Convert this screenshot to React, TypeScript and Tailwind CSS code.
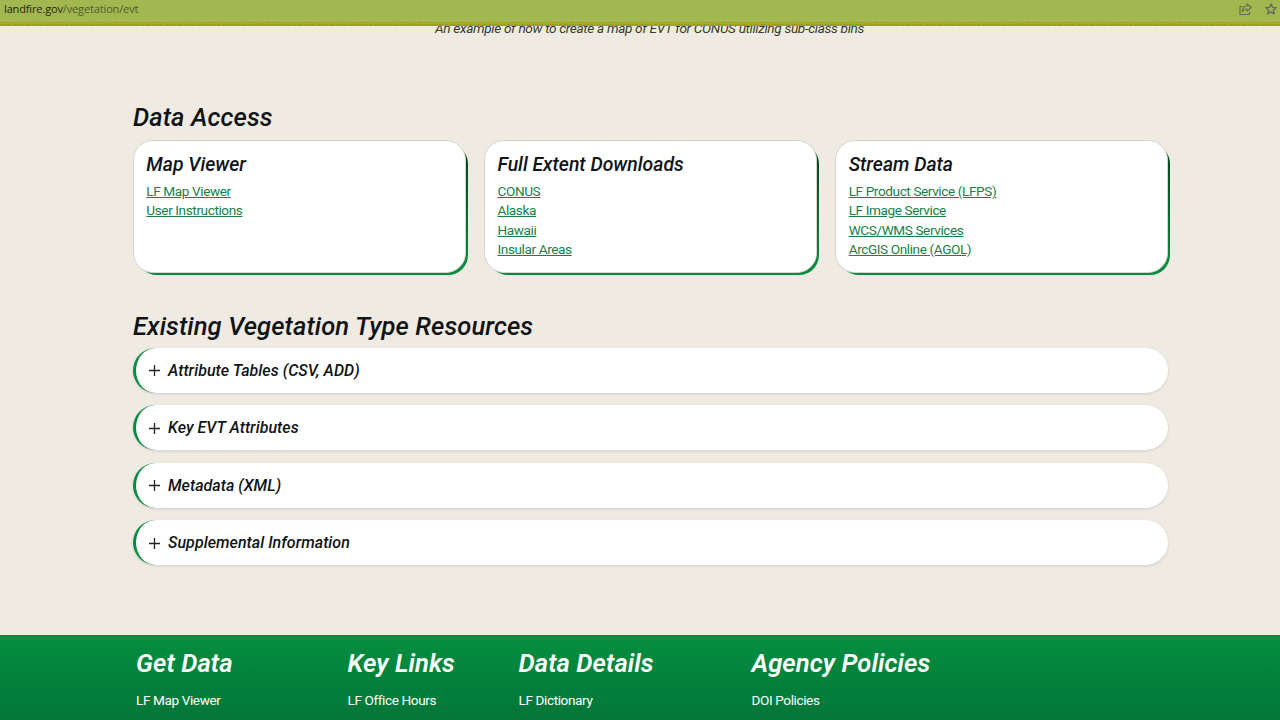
const cards = [
  { title: "Map Viewer", links: ["LF Map Viewer", "User Instructions"] },
  { title: "Full Extent Downloads", links: ["CONUS", "Alaska", "Hawaii", "Insular Areas"] },
  {
    title: "Stream Data",
    links: ["LF Product Service (LFPS)", "LF Image Service", "WCS/WMS Services", "ArcGIS Online (AGOL)"],
  },
];

const resources = ["Attribute Tables (CSV, ADD)", "Key EVT Attributes", "Metadata (XML)", "Supplemental Information"];

const footerColumns = [
  { title: "Get Data", link: "LF Map Viewer", width: "w-[211.5px]" },
  { title: "Key Links", link: "LF Office Hours", width: "w-[171px]" },
  { title: "Data Details", link: "LF Dictionary", width: "w-[233px]" },
  { title: "Agency Policies", link: "DOI Policies", width: "w-[220px]" },
];

function AddressBar() {
  return (
    <header className="flex h-[26px] shrink-0 flex-col bg-[#a3b750]">
      <div className="flex h-[22px] items-start justify-between pl-1 pr-[3px]">
        <p className="pt-[1px] font-['Open_Sans',sans-serif] text-[11px] leading-4 tracking-[-0.14px] text-[#4d5b2c]">
          <span className="text-[#1e2a12]">landfire.gov</span>/vegetation/evt
        </p>
        <div className="flex gap-[13px] pt-[3px] text-[#5f6d55]">
          <svg width="13" height="12" viewBox="0 0 13 12" fill="none" stroke="currentColor" strokeWidth="1.1">
            <path d="M3.500 3.500H1v8h9.500V9" />
            <path d="M8 .8l4.300 3.700L8 8.200V6C6 5.900 4.500 6.700 3.200 8.600 3.500 5.300 5.200 3.100 8 3z" strokeLinejoin="round" />
          </svg>
          <svg width="12" height="12" viewBox="0 0 12 12" fill="none" stroke="currentColor" strokeWidth="1.3" strokeLinejoin="round">
            <path d="M6 .8l1.500 3.500 3.800.3-2.900 2.500.9 3.800L6 8.900l-3.300 2 .9-3.800L.7 4.600l3.800-.3z" />
          </svg>
        </div>
      </div>
      <svg className="block h-1 w-full" width="1280" height="4">
        <defs>
          <pattern id="trim" width="19" height="4" patternUnits="userSpaceOnUse">
            <rect width="19" height="4" fill="#9ea315" />
            <path d="M0 1.500l2 .7 3-1.500 2 1.500 3-1.700 2 1.800 3-1.500 4 .5" stroke="#b0b93c" strokeWidth=".9" fill="none" />
            <path d="M1 2.700l3-.7M8 3l3-1M13 2.700l4-.6" stroke="#909a10" strokeWidth=".8" />
          </pattern>
        </defs>
        <rect width="1280" height="4" fill="url(#trim)" />
      </svg>
    </header>
  );
}

export default function App() {
  return (
    <div className="flex h-[720px] w-[1280px] flex-col overflow-hidden bg-[#efeae2] font-[Roboto,sans-serif] text-[#101417]">
      <AddressBar />
      <main className="flex h-[609px] shrink-0 flex-col overflow-hidden pl-[133px] pr-[111px]">
        <div className="h-[73px] shrink-0 overflow-hidden">
          <p className="-mt-[7px] ml-[302px] whitespace-nowrap text-[13.6px] leading-[19px] tracking-[-0.32px] italic text-[#33393c]">
            An example of how to create a map of EVT for CONUS utilizing sub-class bins
          </p>
        </div>
        <h2 className="h-[40px] shrink-0 text-[25.6px] font-medium italic leading-[36px] tracking-[0.08px]">Data Access</h2>
        <div className="flex h-[169px] shrink-0 gap-[18.500px] pt-[0.5px]">
          {cards.map((card) => (
            <div
              key={card.title}
              className="relative isolate h-[133.500px] w-[332.700px] before:absolute before:-bottom-[2px] before:-right-[2px] before:left-[4px] before:top-[4px] before:-z-10 before:rounded-[20px] before:bg-linear-to-b before:from-[#033d18] before:to-[#058c3f] before:to-90%"
            >
              <section className="h-full rounded-[20px] border border-[#d5d5d2] bg-white pl-[12.300px] pt-[12px]">
                <h3 className="mb-[5.700px] text-[19.4px] font-medium italic leading-6">{card.title}</h3>
                <ul>
                  {card.links.map((link) => (
                    <li key={link} className="text-[13.6px] leading-[19.200px] tracking-[-0.4px]">
                      <a href="#" className="text-[#198047] underline">{link}</a>
                    </li>
                  ))}
                </ul>
              </section>
            </div>
          ))}
        </div>
        <h2 className="h-[39.800px] shrink-0 text-[25.6px] font-medium italic leading-[36px] tracking-[0.08px]">
          Existing Vegetation Type Resources
        </h2>
        <div className="flex flex-col gap-[12.500px]">
          {resources.map((title) => (
            <button
              key={title}
              className="flex h-[45px] w-[1035px] shrink-0 items-center rounded-full border-l-[3px] border-[#058c3f] bg-white pl-[13px] pt-[0.6px] text-left shadow-[0_1px_3px_rgba(0,0,0,0.12)]"
            >
              <svg className="mr-[8px]" width="11" height="11" viewBox="0 0 11 11" stroke="#222" strokeWidth="1.3">
                <path d="M5.500 0v11M0 5.500h11" />
              </svg>
              <span className="text-[16px] font-medium italic leading-5 tracking-[0.04px]">{title}</span>
            </button>
          ))}
        </div>
      </main>
      <footer className="flex h-[85px] shrink-0 bg-linear-to-b from-[#048f40] to-[#037638] pl-[136px] pt-[11px] text-white">
        {footerColumns.map((column) => (
          <div key={column.title} className={column.width}>
            <h2 className="text-[25.6px] font-semibold italic leading-[34px] tracking-[0.07px]">{column.title}</h2>
            <a href="#" className="mt-[10.500px] block text-[13.6px] leading-[19px] tracking-[-0.4px]">{column.link}</a>
          </div>
        ))}
      </footer>
    </div>
  );
}
